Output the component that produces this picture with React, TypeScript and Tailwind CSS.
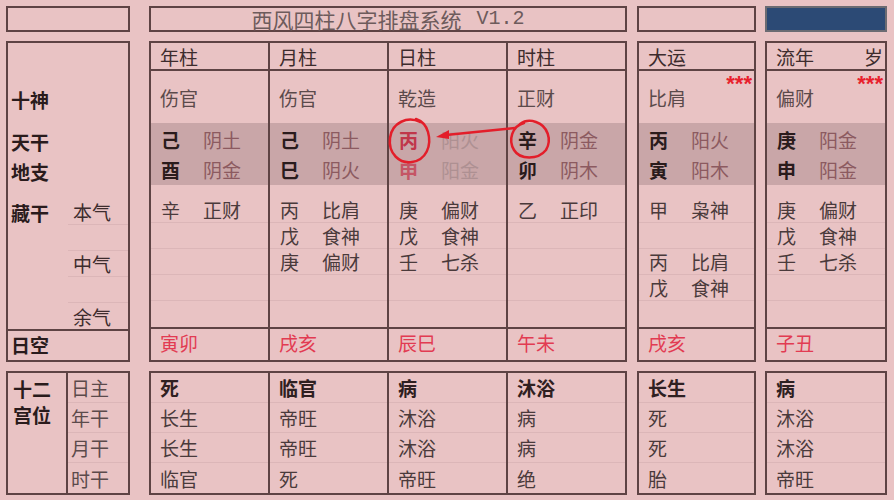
import React from "react";

type Cang = [string, string] | null;

interface Pillar {
  head: string;
  sui?: string;
  shen: string;
  gan: string;
  ganEl: string;
  zhi: string;
  zhiEl: string;
  cang: Cang[];
  kong: string;
  life: string[];
  day?: boolean;
  stars?: boolean;
}

const pillars: Pillar[] = [
  {
    head: "年柱",
    shen: "伤官",
    gan: "己",
    ganEl: "阴土",
    zhi: "酉",
    zhiEl: "阴金",
    cang: [["辛", "正财"], null, null, null, null],
    kong: "寅卯",
    life: ["死", "长生", "长生", "临官"],
  },
  {
    head: "月柱",
    shen: "伤官",
    gan: "己",
    ganEl: "阴土",
    zhi: "巳",
    zhiEl: "阴火",
    cang: [["丙", "比肩"], ["戊", "食神"], ["庚", "偏财"], null, null],
    kong: "戌亥",
    life: ["临官", "帝旺", "帝旺", "死"],
  },
  {
    head: "日柱",
    shen: "乾造",
    gan: "丙",
    ganEl: "阳火",
    zhi: "申",
    zhiEl: "阳金",
    cang: [["庚", "偏财"], ["戊", "食神"], ["壬", "七杀"], null, null],
    kong: "辰巳",
    life: ["病", "沐浴", "沐浴", "帝旺"],
    day: true,
  },
  {
    head: "时柱",
    shen: "正财",
    gan: "辛",
    ganEl: "阴金",
    zhi: "卯",
    zhiEl: "阴木",
    cang: [["乙", "正印"], null, null, null, null],
    kong: "午未",
    life: ["沐浴", "病", "病", "绝"],
  },
];

const dayun: Pillar = {
  head: "大运",
  shen: "比肩",
  gan: "丙",
  ganEl: "阳火",
  zhi: "寅",
  zhiEl: "阳木",
  cang: [["甲", "枭神"], null, ["丙", "比肩"], ["戊", "食神"], null],
  kong: "戌亥",
  life: ["长生", "死", "死", "胎"],
  stars: true,
};

const liunian: Pillar = {
  head: "流年",
  sui: "岁",
  shen: "偏财",
  gan: "庚",
  ganEl: "阳金",
  zhi: "申",
  zhiEl: "阳金",
  cang: [["庚", "偏财"], ["戊", "食神"], ["壬", "七杀"], null, null],
  kong: "子丑",
  life: ["病", "沐浴", "沐浴", "帝旺"],
  stars: true,
};

function UpperCol({ p, first }: { p: Pillar; first?: boolean }) {
  return (
    <div className={`flex-1 basis-0 flex flex-col ${first ? "" : "border-l-2 border-[#5e4344]"}`}>
      {/* header */}
      <div className="h-[28px] border-b-2 border-[#5e4344] flex items-center justify-between pl-[9px] pr-[2px] text-[#3d2c2d]">
        <span>{p.head}</span>
        {p.sui && <span>{p.sui}</span>}
      </div>

      {/* 十神 */}
      <div className="relative h-[52px] flex items-center pl-[9px] text-[#5b4a4b]">
        {p.shen}
        {p.stars && (
          <span className="absolute right-[2px] top-[2px] font-['Liberation_Sans',sans-serif] text-[22px] font-bold leading-none text-[#e8202c]">
            ***
          </span>
        )}
      </div>

      {/* 天干 / 地支 */}
      <div className="h-[62px] bg-[#c9a6a8] flex flex-col">
        <div className="h-[31px] flex items-center pl-[10px] pt-[2px]">
          <span className={`w-[42px] font-bold ${p.day ? "text-[#c0374a]" : "text-[#2a1b1c]"}`}>{p.gan}</span>
          <span className={p.day ? "text-[#ae9092]" : "text-[#8c5a60]"}>{p.ganEl}</span>
        </div>
        <div className="h-[31px] flex items-center pl-[10px]">
          <span className={`w-[42px] font-bold ${p.day ? "text-[#c55565]" : "text-[#2a1b1c]"}`}>{p.zhi}</span>
          <span className={p.day ? "text-[#ae9092]" : "text-[#8c5a60]"}>{p.zhiEl}</span>
        </div>
      </div>

      {/* 藏干 */}
      <div className="h-[12px]" />
      {p.cang.map((c, i) => (
        <div
          key={i}
          className={`h-[26px] flex items-center pl-[10px] text-[#4a3a3b] ${i < 4 ? "border-b border-[#dcb6b8]" : ""}`}
        >
          {c && (
            <>
              <span className="w-[42px]">{c[0]}</span>
              <span>{c[1]}</span>
            </>
          )}
        </div>
      ))}

      {/* 日空 */}
      <div className="h-[29px] border-t-2 border-[#5e4344] flex items-center pl-[9px] text-[#e23b52]">
        {p.kong}
      </div>
    </div>
  );
}

function LowerCol({ p, first }: { p: Pillar; first?: boolean }) {
  return (
    <div className={`flex-1 basis-0 flex flex-col ${first ? "" : "border-l-2 border-[#5e4344]"}`}>
      {p.life.map((v, i) => (
        <div
          key={i}
          className={`h-[30px] flex items-center pl-[9px] ${i < 3 ? "border-b border-[#dcb6b8]" : ""} ${
            i === 0 ? "font-bold text-[#2f2021]" : "text-[#4a3a3b]"
          }`}
        >
          {v}
        </div>
      ))}
    </div>
  );
}

export default function App() {
  return (
    <div className="relative w-[894px] h-[500px] overflow-hidden bg-[#e9c3c4] pt-[6px] pl-[6px] font-['Noto_Sans_CJK_SC',sans-serif] text-[19px] leading-none">
      {/* top bar */}
      <div className="flex h-[26px]">
        <div className="w-[124px] border-2 border-[#5e4344]" />
        <div className="ml-[19px] w-[478px] border-2 border-[#5e4344] flex items-center justify-center text-[#6d5b5c] text-[21px]">
          <span>西风四柱八字排盘系统</span>
          <span className="ml-[15px] font-['Liberation_Mono',monospace] text-[20px]">V1.2</span>
        </div>
        <div className="ml-[10px] w-[119px] border-2 border-[#5e4344]" />
        <div className="ml-[9px] w-[122px] border-2 border-[#6b6b72] bg-[#2c4a75]" />
      </div>

      {/* main chart */}
      <div className="mt-[9px] flex h-[321px]">
        <div className="w-[124px] border-2 border-[#5e4344] flex flex-col font-bold text-[#2a1b1c]">
          <div className="h-[30px]" />
          <div className="h-[52px] flex items-center pl-[3px]">十神</div>
          <div className="h-[31px] flex items-center pl-[3px] pt-[2px]">天干</div>
          <div className="h-[31px] flex items-center pl-[3px]">地支</div>
          <div className="h-[12px]" />
          {["本气", "", "中气", "", "余气"].map((q, i) => (
            <div key={i} className="h-[26px] flex">
              <div className="w-[60px] flex items-center pl-[3px]">{i === 0 ? "藏干" : ""}</div>
              <div
                className={`flex-1 flex items-center pl-[5px] font-normal text-[#3d2c2d] ${
                  i < 4 ? "border-b border-[#dcb6b8]" : ""
                }`}
              >
                {q}
              </div>
            </div>
          ))}
          <div className="h-[29px] border-t-2 border-[#5e4344] flex items-center pl-[3px]">日空</div>
        </div>

        <div className="ml-[19px] w-[478px] border-2 border-[#5e4344] flex">
          {pillars.map((p, i) => (
            <UpperCol key={p.head} p={p} first={i === 0} />
          ))}
        </div>

        <div className="ml-[10px] w-[119px] border-2 border-[#5e4344] flex">
          <UpperCol p={dayun} first />
        </div>
        <div className="ml-[9px] w-[122px] border-2 border-[#5e4344] flex">
          <UpperCol p={liunian} first />
        </div>
      </div>

      {/* 十二宫位 */}
      <div className="mt-[9px] flex h-[124px]">
        <div className="w-[124px] border-2 border-[#5e4344] flex">
          <div className="w-[60px] border-r-2 border-[#5e4344] flex flex-col font-bold text-[#2a1b1c] pl-[5px] pt-[6px] gap-[7px]">
            <span>十二</span>
            <span>宫位</span>
          </div>
          <div className="flex-1 flex flex-col text-[#5b4a4b]">
            {["日主", "年干", "月干", "时干"].map((t, i) => (
              <div key={t} className={`h-[30px] flex items-center pl-[3px] ${i < 3 ? "border-b border-[#dcb6b8]" : ""}`}>
                {t}
              </div>
            ))}
          </div>
        </div>

        <div className="ml-[19px] w-[478px] border-2 border-[#5e4344] flex">
          {pillars.map((p, i) => (
            <LowerCol key={p.head} p={p} first={i === 0} />
          ))}
        </div>
        <div className="ml-[10px] w-[119px] border-2 border-[#5e4344] flex">
          <LowerCol p={dayun} first />
        </div>
        <div className="ml-[9px] w-[122px] border-2 border-[#5e4344] flex">
          <LowerCol p={liunian} first />
        </div>
      </div>

      {/* red hand-drawn annotation */}
      <svg className="absolute left-0 top-0 pointer-events-none" width="894" height="500" viewBox="0 0 894 500" fill="none">
        <path
          d="M420 122 C408 116 392 122 390 138 C388 154 400 164 412 162 C426 160 432 146 428 132 C426 125 422 121 416 119"
          stroke="#e31e2a"
          strokeWidth="2.5"
          strokeLinecap="round"
        />
        <path
          d="M524 123 C512 126 508 140 514 150 C520 160 538 160 546 150 C552 140 548 126 536 122 C530 120 524 121 520 124"
          stroke="#e31e2a"
          strokeWidth="2.5"
          strokeLinecap="round"
        />
        <path d="M515 128 L446 135" stroke="#e31e2a" strokeWidth="2.5" strokeLinecap="round" />
        <path d="M436 137 L449 130 L449 139 Z" fill="#e31e2a" />
      </svg>
    </div>
  );
}
